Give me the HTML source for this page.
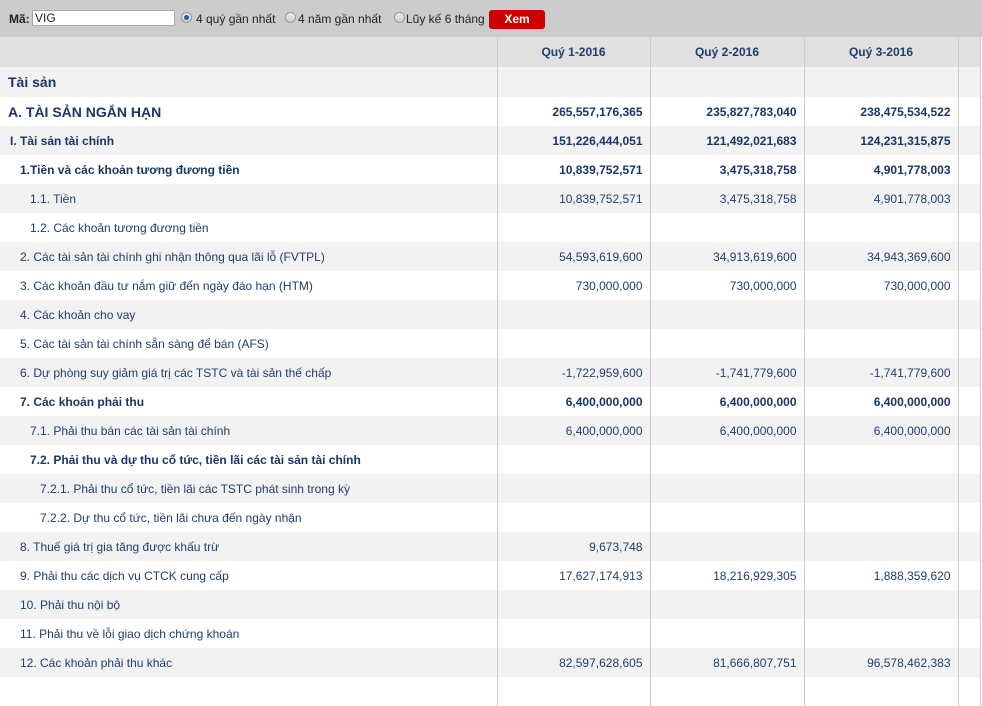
<!DOCTYPE html>
<html><head><meta charset="utf-8"><style>
body{margin:0;width:982px;height:685px;overflow:hidden;background:#fff;font-family:"Liberation Sans",Arial,sans-serif;}
.top{height:37px;background:#cccccc;position:relative;font-size:12px;color:#222;}
.top span,.top input,.top .btn,.top .r{position:absolute;}
.inp{left:32px;top:10px;width:143px;height:16px;border:1px solid #aaa;background:#fff;font-size:12px;padding:0 2px;box-sizing:border-box;line-height:15px}
.r{width:11px;height:11px;border-radius:50%;border:1px solid #999;background:linear-gradient(#eee,#ccc);top:12px;box-sizing:border-box}
.r.on::after{content:"";position:absolute;left:2px;top:2px;width:5px;height:5px;border-radius:50%;background:#1f5fa8}
.btn{left:489px;top:10px;width:56px;height:19px;background:#cc0000;border-radius:3px;color:#fff;font-weight:bold;text-align:center;line-height:19px;font-size:12px}
table{border-collapse:collapse;width:980px;table-layout:fixed;}
td{height:29px;padding:0;font-size:12px;color:#1f3d6e;white-space:nowrap;border-right:1px solid #cccccc;box-sizing:border-box}
td.n{text-align:right;padding-right:7px}
tr.g td{background:#f2f2f2}
tr.h td{background:#e0e0e0;height:30px;font-weight:bold;text-align:center}
tr.b td{font-weight:bold;color:#183766}
tr.big td{font-size:14px}
tr.big td.n{font-size:12px}
</style></head><body>
<div class="top">
<span style="left:9px;top:12px;font-weight:bold">Mã:</span>
<div class="inp" style="position:absolute">VIG</div>
<div class="r on" style="left:181px"></div><span style="left:196px;top:12px">4 quý gần nhất</span>
<div class="r" style="left:285px"></div><span style="left:298px;top:12px">4 năm gần nhất</span>
<div class="r" style="left:394px"></div><span style="left:406px;top:12px">Lũy kế 6 tháng</span>
<div class="btn">Xem</div>
</div>
<table>
<colgroup><col style="width:497px"><col style="width:153px"><col style="width:154px"><col style="width:154px"><col style="width:22px"></colgroup>
<tr class="h"><td></td><td>Quý 1-2016</td><td>Quý 2-2016</td><td>Quý 3-2016</td><td></td></tr>
<tr class="g b big"><td style="padding-left:8px;height:30px">Tài sản</td><td></td><td></td><td></td><td></td></tr>
<tr class="b big"><td style="padding-left:8px">A. TÀI SẢN NGẮN HẠN</td><td class="n">265,557,176,365</td><td class="n">235,827,783,040</td><td class="n">238,475,534,522</td><td></td></tr>
<tr class="g b"><td style="padding-left:10px">I. Tài sản tài chính</td><td class="n">151,226,444,051</td><td class="n">121,492,021,683</td><td class="n">124,231,315,875</td><td></td></tr>
<tr class="b"><td style="padding-left:20px">1.Tiền và các khoản tương đương tiền</td><td class="n">10,839,752,571</td><td class="n">3,475,318,758</td><td class="n">4,901,778,003</td><td></td></tr>
<tr class="g"><td style="padding-left:30px">1.1. Tiền</td><td class="n">10,839,752,571</td><td class="n">3,475,318,758</td><td class="n">4,901,778,003</td><td></td></tr>
<tr><td style="padding-left:30px">1.2. Các khoản tương đương tiền</td><td></td><td></td><td></td><td></td></tr>
<tr class="g"><td style="padding-left:20px">2. Các tài sản tài chính ghi nhận thông qua lãi lỗ (FVTPL)</td><td class="n">54,593,619,600</td><td class="n">34,913,619,600</td><td class="n">34,943,369,600</td><td></td></tr>
<tr><td style="padding-left:20px">3. Các khoản đầu tư nắm giữ đến ngày đáo hạn (HTM)</td><td class="n">730,000,000</td><td class="n">730,000,000</td><td class="n">730,000,000</td><td></td></tr>
<tr class="g"><td style="padding-left:20px">4. Các khoản cho vay</td><td></td><td></td><td></td><td></td></tr>
<tr><td style="padding-left:20px">5. Các tài sản tài chính sẵn sàng để bán (AFS)</td><td></td><td></td><td></td><td></td></tr>
<tr class="g"><td style="padding-left:20px">6. Dự phòng suy giảm giá trị các TSTC và tài sản thế chấp</td><td class="n">-1,722,959,600</td><td class="n">-1,741,779,600</td><td class="n">-1,741,779,600</td><td></td></tr>
<tr class="b"><td style="padding-left:20px">7. Các khoản phải thu</td><td class="n">6,400,000,000</td><td class="n">6,400,000,000</td><td class="n">6,400,000,000</td><td></td></tr>
<tr class="g"><td style="padding-left:30px">7.1. Phải thu bán các tài sản tài chính</td><td class="n">6,400,000,000</td><td class="n">6,400,000,000</td><td class="n">6,400,000,000</td><td></td></tr>
<tr class="b"><td style="padding-left:30px">7.2. Phải thu và dự thu cổ tức, tiền lãi các tài sản tài chính</td><td></td><td></td><td></td><td></td></tr>
<tr class="g"><td style="padding-left:40px">7.2.1. Phải thu cổ tức, tiền lãi các TSTC phát sinh trong kỳ</td><td></td><td></td><td></td><td></td></tr>
<tr><td style="padding-left:40px">7.2.2. Dự thu cổ tức, tiền lãi chưa đến ngày nhận</td><td></td><td></td><td></td><td></td></tr>
<tr class="g"><td style="padding-left:20px">8. Thuế giá trị gia tăng được khấu trừ</td><td class="n">9,673,748</td><td></td><td></td><td></td></tr>
<tr><td style="padding-left:20px">9. Phải thu các dịch vụ CTCK cung cấp</td><td class="n">17,627,174,913</td><td class="n">18,216,929,305</td><td class="n">1,888,359,620</td><td></td></tr>
<tr class="g"><td style="padding-left:20px">10. Phải thu nội bộ</td><td></td><td></td><td></td><td></td></tr>
<tr><td style="padding-left:20px">11. Phải thu về lỗi giao dịch chứng khoán</td><td></td><td></td><td></td><td></td></tr>
<tr class="g"><td style="padding-left:20px">12. Các khoản phải thu khác</td><td class="n">82,597,628,605</td><td class="n">81,666,807,751</td><td class="n">96,578,462,383</td><td></td></tr>
<tr><td></td><td></td><td></td><td></td><td></td></tr>
</table>
</body></html>
